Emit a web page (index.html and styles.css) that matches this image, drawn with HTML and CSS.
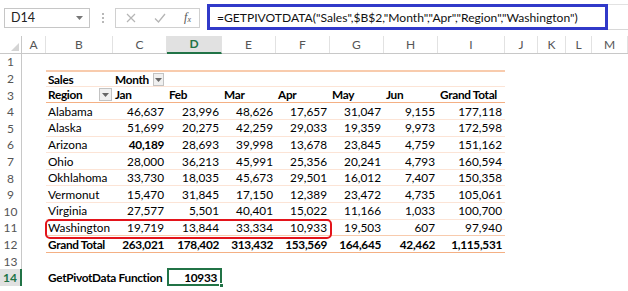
FILE: index.html
```html
<!DOCTYPE html>
<html>
<head>
<meta charset="utf-8">
<link rel="stylesheet" href="styles.css">
</head>
<body>
<div class="fbar">
  <div class="namebox"><span>D14</span><svg class="caret" width="7" height="4" viewBox="0 0 7 4"><path d="M0 0h7L3.5 4z" fill="#777"/></svg></div>
  <div class="dots"><i></i><i></i><i></i></div>
  <div class="fxbox">
    <svg width="10" height="10" viewBox="0 0 10 10"><path d="M1 1L9 9M9 1L1 9" stroke="#b5b5b5" stroke-width="1.2" fill="none"/></svg>
    <svg width="12" height="10" viewBox="0 0 12 10"><path d="M1 5.5L4.5 9L11 1" stroke="#b5b5b5" stroke-width="1.3" fill="none"/></svg>
    <span class="fx">f<sub>x</sub></span>
  </div>
  <div class="formula">=GETPIVOTDATA("Sales",$B$2,"Month","Apr","Region","Washington")</div>
  <div class="fill"></div>
</div>

<div class="sheet">
  <div class="colhead">
    <div class="corner"><svg width="8" height="8" viewBox="0 0 8 8"><path d="M8 0V8H0z" fill="#d4d4d4"/></svg></div>
    <div>A</div><div>B</div><div>C</div><div class="sel">D</div><div>E</div><div>F</div><div>G</div><div>H</div><div>I</div><div>J</div><div>K</div><div>L</div><div>M</div>
  </div>

  <div class="r"><div class="rh">1</div></div>

  <div class="r"><div class="rh">2</div><div class="a"></div>
    <div class="pv top lite"><div class="t b">Sales</div><div class="t b">Month<span class="dd"><svg width="7" height="4" viewBox="0 0 7 4"><path d="M0 0h7L3.5 4z" fill="#666"/></svg></span></div><div></div><div></div><div></div><div></div><div></div><div></div></div>
  </div>

  <div class="r"><div class="rh">3</div><div class="a"></div>
    <div class="pv head"><div class="t b split">Region<span class="dd"><svg width="7" height="4" viewBox="0 0 7 4"><path d="M0 0h7L3.5 4z" fill="#666"/></svg></span></div><div class="t b">Jan</div><div class="t b">Feb</div><div class="t b">Mar</div><div class="t b">Apr</div><div class="t b">May</div><div class="t b">Jun</div><div class="t b">Grand Total</div></div>
  </div>

  <div class="r"><div class="rh">4</div><div class="a"></div>
    <div class="pv lite"><div class="t">Alabama</div><div class="n">46,637</div><div class="n">23,996</div><div class="n">48,626</div><div class="n">17,657</div><div class="n">31,047</div><div class="n">9,155</div><div class="n">177,118</div></div>
  </div>

  <div class="r"><div class="rh">5</div><div class="a"></div>
    <div class="pv lite"><div class="t">Alaska</div><div class="n">51,699</div><div class="n">20,275</div><div class="n">42,259</div><div class="n">29,033</div><div class="n">19,359</div><div class="n">9,973</div><div class="n">172,598</div></div>
  </div>

  <div class="r"><div class="rh">6</div><div class="a"></div>
    <div class="pv lite"><div class="t">Arizona</div><div class="n b">40,189</div><div class="n">28,693</div><div class="n">39,998</div><div class="n">13,678</div><div class="n">23,845</div><div class="n">4,759</div><div class="n">151,162</div></div>
  </div>

  <div class="r"><div class="rh">7</div><div class="a"></div>
    <div class="pv lite"><div class="t">Ohio</div><div class="n">28,000</div><div class="n">36,213</div><div class="n">45,991</div><div class="n">25,356</div><div class="n">20,241</div><div class="n">4,793</div><div class="n">160,594</div></div>
  </div>

  <div class="r"><div class="rh">8</div><div class="a"></div>
    <div class="pv lite"><div class="t">Okhlahoma</div><div class="n">33,730</div><div class="n">18,035</div><div class="n">45,673</div><div class="n">29,501</div><div class="n">16,012</div><div class="n">7,407</div><div class="n">150,358</div></div>
  </div>

  <div class="r"><div class="rh">9</div><div class="a"></div>
    <div class="pv lite"><div class="t">Vermonut</div><div class="n">15,470</div><div class="n">31,845</div><div class="n">17,150</div><div class="n">12,389</div><div class="n">23,472</div><div class="n">4,735</div><div class="n">105,061</div></div>
  </div>

  <div class="r"><div class="rh">10</div><div class="a"></div>
    <div class="pv lite"><div class="t">Virginia</div><div class="n">27,577</div><div class="n">5,501</div><div class="n">40,401</div><div class="n">15,022</div><div class="n">11,166</div><div class="n">1,033</div><div class="n">100,700</div></div>
  </div>

  <div class="r"><div class="rh">11</div><div class="a"></div>
    <div class="pv mid"><div class="t">Washington</div><div class="n">19,719</div><div class="n">13,844</div><div class="n">33,334</div><div class="n">10,933</div><div class="n">19,503</div><div class="n">607</div><div class="n">97,940</div></div>
  </div>

  <div class="r"><div class="rh">12</div><div class="a"></div>
    <div class="pv head"><div class="t b">Grand Total</div><div class="n b">263,021</div><div class="n b">178,402</div><div class="n b">313,432</div><div class="n b">153,569</div><div class="n b">164,645</div><div class="n b">42,462</div><div class="n b">1,115,531</div></div>
  </div>

  <div class="r"><div class="rh">13</div></div>

  <div class="r"><div class="rh active">14</div><div class="a"></div>
    <div class="plain"><div class="t b">GetPivotData Function</div><div></div><div class="n b cur">10933<span class="handle"></span></div></div>
  </div>

  <div class="redbox"></div>
</div>
</body>
</html>
```

FILE: styles.css
```css
* { box-sizing: border-box; }
html, body { margin: 0; padding: 0; background: #fff; }
body {
  width: 628px;
  height: 291px;
  overflow: hidden;
  font-family: Lato, "Open Sans", sans-serif;
  font-size: 11.8px;
  color: #000;
}

/* formula bar */
.fbar {
  height: 36px;
  display: flex;
  align-items: center;
  padding-left: 4px;
}
.namebox {
  width: 86px;
  height: 20px;
  border: 1px solid #c6c6c6;
  display: flex;
  align-items: center;
  justify-content: space-between;
  padding: 0 6px 0 6px;
  font-size: 12.5px;
  color: #222;
  margin-top: -1px;
}
.dots {
  width: 25px;
  display: flex;
  flex-direction: column;
  align-items: center;
  gap: 2px;
  margin-top: -1px;
}
.dots i { width: 2px; height: 2px; background: #b8b8b8; display: block; }
.fxbox {
  width: 85px;
  height: 20px;
  border: 1px solid #d0d0d0;
  display: flex;
  align-items: center;
  justify-content: space-between;
  padding: 0 8px 0 10px;
  margin-top: -1px;
}
.fx {
  font-family: "Liberation Serif", serif;
  font-style: italic;
  font-size: 12px;
  color: #555;
}
.fx sub { font-size: 8px; vertical-align: -1px; }
.formula {
  margin-left: 7px;
  width: 401px;
  height: 26px;
  border: 3px solid #3139c9;
  display: flex;
  align-items: center;
  padding-left: 7px;
  font-size: 12.1px;
  color: #111;
  white-space: nowrap;
  overflow: hidden;
  margin-top: -2px;
}
.fill {
  flex: 1;
  height: 26px;
  border-top: 1px solid #e2e2e2;
  border-bottom: 1px solid #d8d8d8;
  margin-top: -2px;
}

/* sheet */
.sheet { position: relative; }
.colhead {
  height: 17.7px;
  display: grid;
  grid-template-columns: 22px 24px 67px 54px 55px 54px 54px 54px 54px 67px 33px 28px 26px 36px;
  border-bottom: 1px solid #c8c8c8;
  color: #555;
  font-size: 12px;
}
.colhead > div {
  display: flex;
  align-items: center;
  justify-content: center;
  border-right: 1px solid #e2e2e2;
}
.colhead .corner {
  justify-content: flex-end;
  align-items: flex-end;
  padding: 0 2px 2px 0;
  border-right: 1px solid #c8c8c8;
}
.colhead .sel {
  background: #e1e1e1;
  color: #217346;
  font-weight: bold;
  border-bottom: 2px solid #217346;
  margin-bottom: -1px;
}

.r {
  height: 16.6px;
  display: flex;
}
.rh {
  width: 22px;
  flex: none;
  border-right: 1px solid #c8c8c8;
  color: #555;
  font-size: 12px;
  display: flex;
  align-items: center;
  justify-content: center;
}
.rh.active {
  background: #e1e1e1;
  color: #217346;
  font-weight: bold;
  border-right: 2px solid #217346;
}
.a { width: 24px; flex: none; }

.pv, .plain {
  display: grid;
  grid-template-columns: 67px 54px 55px 54px 54px 54px 54px 67px;
  width: 459px;
  height: 100%;
}
.pv.lite { border-bottom: 1px solid #fce4d6; }
.pv.top { border-top: 2px solid #f8cbad; }
.pv.head { border-bottom: 1px solid #f4b084; }
.pv.mid { border-bottom: 1px solid #f8cbad; }

.t, .n {
  display: flex;
  align-items: center;
  white-space: nowrap;
  padding: 0 3px 0 2px;
  overflow: visible;
}
.n { justify-content: flex-end; }
.b { font-weight: bold; letter-spacing: -0.3px; }
.split { justify-content: space-between; padding-right: 1px; }

.dd {
  width: 13px;
  height: 13px;
  border: 1px solid #c3c3c3;
  background: #f0f0f0;
  display: inline-flex;
  align-items: center;
  justify-content: center;
  margin-left: 4px;
}

.cur {
  position: relative;
  border: 2px solid #217346;
  margin-top: -1px;
  height: 18px;
  padding-right: 3px;
}
.handle {
  position: absolute;
  right: -4px;
  bottom: -4px;
  width: 5px;
  height: 5px;
  background: #217346;
  border: 1px solid #fff;
}

.redbox {
  position: absolute;
  left: 45px;
  top: 183px;
  width: 287px;
  height: 20px;
  border: 2px solid #e3141b;
  border-radius: 5px;
  pointer-events: none;
}
```
